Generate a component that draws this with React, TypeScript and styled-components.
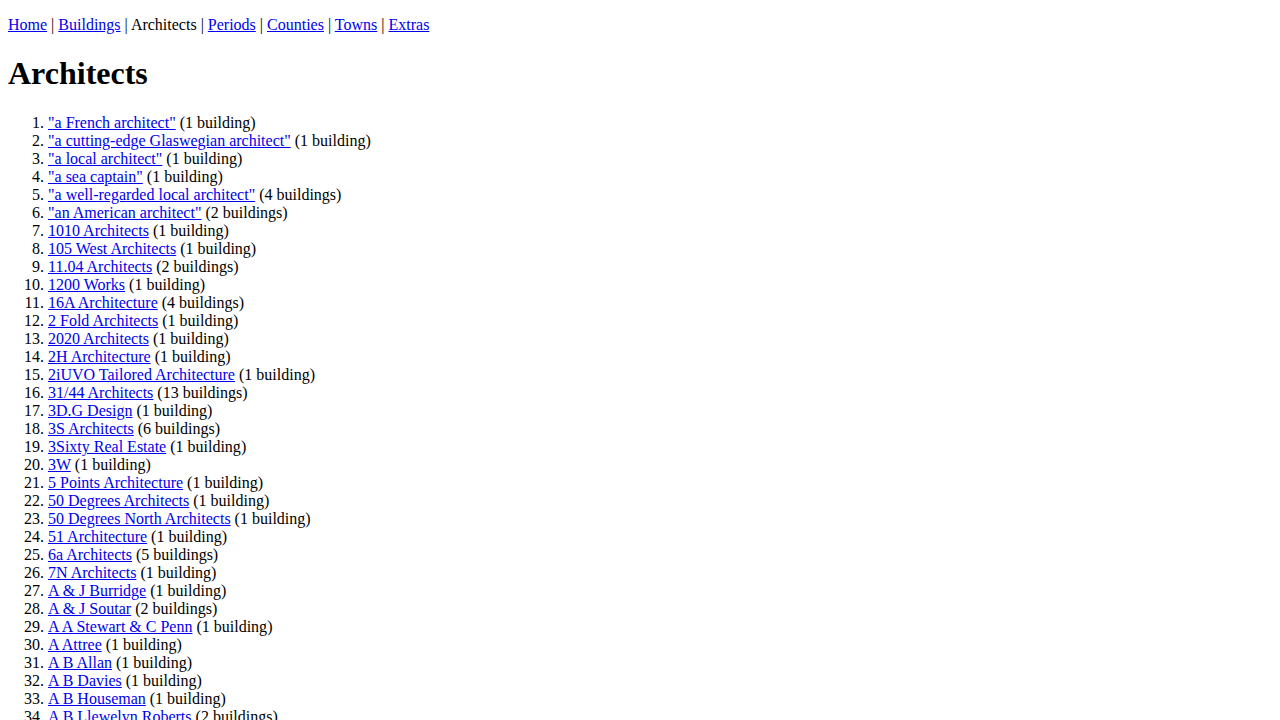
import styled, { createGlobalStyle } from "styled-components";

const GlobalStyle = createGlobalStyle`
  body {
    margin: 0 8px 8px;
    padding-top: 0;
    font-family: "Liberation Serif", "Times New Roman", serif;
    font-size: 16px;
    color: #000000;
    background: #ffffff;
  }
`;

const architects: [string, number][] = [
  ['"a French architect"', 1],
  ['"a cutting-edge Glaswegian architect"', 1],
  ['"a local architect"', 1],
  ['"a sea captain"', 1],
  ['"a well-regarded local architect"', 4],
  ['"an American architect"', 2],
  ["1010 Architects", 1],
  ["105 West Architects", 1],
  ["11.04 Architects", 2],
  ["1200 Works", 1],
  ["16A Architecture", 4],
  ["2 Fold Architects", 1],
  ["2020 Architects", 1],
  ["2H Architecture", 1],
  ["2iUVO Tailored Architecture", 1],
  ["31/44 Architects", 13],
  ["3D.G Design", 1],
  ["3S Architects", 6],
  ["3Sixty Real Estate", 1],
  ["3W", 1],
  ["5 Points Architecture", 1],
  ["50 Degrees Architects", 1],
  ["50 Degrees North Architects", 1],
  ["51 Architecture", 1],
  ["6a Architects", 5],
  ["7N Architects", 1],
  ["A & J Burridge", 1],
  ["A & J Soutar", 2],
  ["A A Stewart & C Penn", 1],
  ["A Attree", 1],
  ["A B Allan", 1],
  ["A B Davies", 1],
  ["A B Houseman", 1],
  ["A B Llewelyn Roberts", 2],
];

const navItems = [
  { label: "Home", link: true },
  { label: "Buildings", link: true },
  { label: "Architects", link: false },
  { label: "Periods", link: true },
  { label: "Counties", link: true },
  { label: "Towns", link: true },
  { label: "Extras", link: true },
];

const App = () => {
  return (
    <>
      <GlobalStyle />
      <Nav>
        {navItems.map((item, i) => (
          <span key={item.label}>
            {i > 0 && " | "}
            {item.link ? <NavLink href="#">{item.label}</NavLink> : item.label}
          </span>
        ))}
      </Nav>
      <Title>Architects</Title>
      <ArchitectList>
        {architects.map(([name, count]) => (
          <Item key={name}>
            <ItemLink href="#">{name}</ItemLink> ({count}{" "}
            {count === 1 ? "building" : "buildings"})
          </Item>
        ))}
      </ArchitectList>
    </>
  );
};

export default App;

const Nav = styled.p`
  margin: 0;
  padding-top: 16px;
  line-height: 18px;
`;

const NavLink = styled.a`
  color: #0000ee;
  text-decoration: underline;
`;

const Title = styled.h1`
  font-size: 32px;
  font-weight: bold;
  line-height: 37px;
  margin: 21.44px 0;
`;

const ArchitectList = styled.ol`
  margin: 16px 0;
  padding-left: 40px;
`;

const Item = styled.li`
  line-height: 18px;
`;

const ItemLink = styled.a`
  color: #0000ee;
  text-decoration: underline;
`;
